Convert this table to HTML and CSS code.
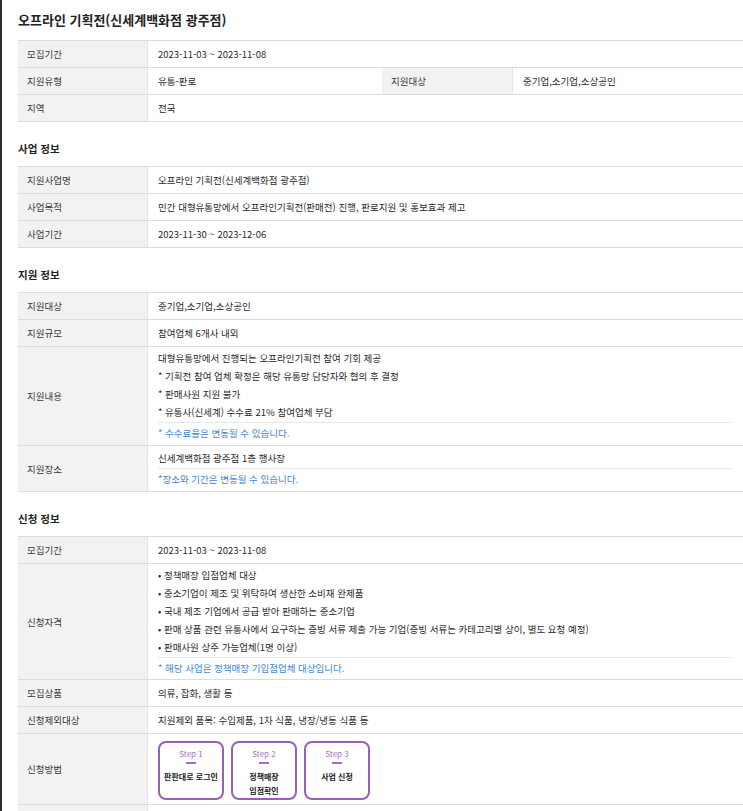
FILE: index.html
```html
<!DOCTYPE html>
<html lang="ko">
<head>
    <meta charset="UTF-8">
    <meta name="viewport" content="width=device-width, initial-scale=1.0">
    <link rel="stylesheet" href="styles.css">
    <title>오프라인 기획전(신세계백화점 광주점)</title>
</head>
<body>
    <section id="page">

        <h1 class="page-title">오프라인 기획전(신세계백화점 광주점)</h1>

        <div class="info-table">
            <div class="row">
                <div class="th">모집기간</div>
                <div class="td">2023-11-03 ~ 2023-11-08</div>
            </div>
            <div class="row quad">
                <div class="th">지원유형</div>
                <div class="td">유통-판로</div>
                <div class="th">지원대상</div>
                <div class="td">중기업,소기업,소상공인</div>
            </div>
            <div class="row">
                <div class="th">지역</div>
                <div class="td">전국</div>
            </div>
        </div>

        <h2 class="section-title">사업 정보</h2>
        <div class="info-table">
            <div class="row">
                <div class="th">지원사업명</div>
                <div class="td">오프라인 기획전(신세계백화점 광주점)</div>
            </div>
            <div class="row">
                <div class="th">사업목적</div>
                <div class="td">민간 대형유통망에서 오프라인기획전(판매전) 진행, 판로지원 및 홍보효과 제고</div>
            </div>
            <div class="row">
                <div class="th">사업기간</div>
                <div class="td">2023-11-30 ~ 2023-12-06</div>
            </div>
        </div>

        <h2 class="section-title">지원 정보</h2>
        <div class="info-table">
            <div class="row">
                <div class="th">지원대상</div>
                <div class="td">중기업,소기업,소상공인</div>
            </div>
            <div class="row">
                <div class="th">지원규모</div>
                <div class="td">참여업체 6개사 내외</div>
            </div>
            <div class="row">
                <div class="th">지원내용</div>
                <div class="td multi tall">
                    <p>대형유통망에서 진행되는 오프라인기획전 참여 기회 제공</p>
                    <p>* 기획전 참여 업체 확정은 해당 유통망 담당자와 협의 후 결정</p>
                    <p>* 판매사원 지원 불가</p>
                    <p>* 유통사(신세계) 수수료 21% 참여업체 부담</p>
                    <p class="note">* 수수료율은 변동될 수 있습니다.</p>
                </div>
            </div>
            <div class="row">
                <div class="th">지원장소</div>
                <div class="td multi place">
                    <p>신세계백화점 광주점 1층 행사장</p>
                    <p class="note">*장소와 기간은 변동될 수 있습니다.</p>
                </div>
            </div>
        </div>

        <h2 class="section-title">신청 정보</h2>
        <div class="info-table">
            <div class="row">
                <div class="th">모집기간</div>
                <div class="td">2023-11-03 ~ 2023-11-08</div>
            </div>
            <div class="row">
                <div class="th">신청자격</div>
                <div class="td multi">
                    <p>• 정책매장 입점업체 대상</p>
                    <p>• 중소기업이 제조 및 위탁하여 생산한 소비재 완제품</p>
                    <p>• 국내 제조 기업에서 공급 받아 판매하는 중소기업</p>
                    <p>• 판매 상품 관련 유통사에서 요구하는 증빙 서류 제출 가능 기업(증빙 서류는 카테고리별 상이, 별도 요청 예정)</p>
                    <p>• 판매사원 상주 가능업체(1명 이상)</p>
                    <p class="note">* 해당 사업은 정책매장 기입점업체 대상입니다.</p>
                </div>
            </div>
            <div class="row">
                <div class="th">모집상품</div>
                <div class="td">의류, 잡화, 생활 등</div>
            </div>
            <div class="row">
                <div class="th">신청제외대상</div>
                <div class="td">지원제외 품목: 수입제품, 1차 식품, 냉장/냉동 식품 등</div>
            </div>
            <div class="row">
                <div class="th">신청방법</div>
                <div class="td steps">
                    <div class="step">
                        <span class="step-no">Step 1</span>
                        <span class="step-bar"></span>
                        <span class="step-name">판판대로 로그인</span>
                    </div>
                    <div class="step">
                        <span class="step-no">Step 2</span>
                        <span class="step-bar"></span>
                        <span class="step-name">정책매장<br>입점확인</span>
                    </div>
                    <div class="step">
                        <span class="step-no">Step 3</span>
                        <span class="step-bar"></span>
                        <span class="step-name">사업 신청</span>
                    </div>
                </div>
            </div>
            <div class="row">
                <div class="th"></div>
                <div class="td"></div>
            </div>
        </div>

    </section>
</body>
</html>
```

FILE: styles.css
```css
* {
    box-sizing: border-box;
    font-family: "Noto Sans CJK KR", "Noto Sans", sans-serif;
}

html, body {
    margin: 0;
    padding: 0;
    background-color: #FFFFFF;
}

body {
    min-height: 100vh;
    border-left: 2px solid #2E2E2E;
    overflow: hidden;
}

#page {
    padding: 10px 0 0 16px;

    color: #2A2A2A;
    font-size: 9.5px;
}

.page-title {
    margin: 0 0 10px 0;

    line-height: 20px;
    font-size: 13px;
    font-weight: bold;
    color: #222222;
}

.section-title {
    margin: 0 0 8px 0;
    padding-top: 18px;

    line-height: 18px;
    font-size: 10.5px;
    font-weight: bold;
    color: #222222;
}

.section-title + .info-table {
    margin-top: 0;
}

/*

    TABLES

*/

.info-table {
    border-top: 1px solid #DCDCDC;
}

.row {
    display: grid;
    grid-template-columns: 130px 1fr;

    border-bottom: 1px solid #DCDCDC;
}

.row.quad {
    grid-template-columns: 130px 234px 131px 1fr;
}

.th {
    display: flex;
    align-items: center;

    min-height: 26px;
    padding-left: 9px;

    background-color: #F2F2F2;
    border-right: 1px solid #E4E4E4;

    color: #3A3A3A;
}

.td {
    min-height: 26px;
    padding: 4px 10px;

    line-height: 18px;
    white-space: nowrap;
}

.td p {
    margin: 0;
}

.td.multi {
    padding: 2px 10px 1px 10px;
}

.td.multi.tall {
    padding: 2px 10px 2px 10px;
}

.td.multi.place {
    padding: 3px 10px 2px 10px;
}

.td .note {
    margin-top: 1px;

    border-top: 1px solid #E8E8E8;

    line-height: 20px;
    color: #3F87D4;
}

/*

    STEPS

*/

.td.steps {
    display: flex;
    gap: 7px;

    padding: 7px 10px 4px 10px;
}

.step {
    display: flex;
    flex-direction: column;
    align-items: center;

    width: 66px;
    height: 59px;
    padding-top: 5px;

    border: 2px solid #9C5FB8;
    border-radius: 8px;

    text-align: center;
}

.step-no {
    line-height: 12px;
    font-size: 8px;
    color: #A46BC4;
}

.step-bar {
    width: 10px;
    height: 2px;
    margin-top: 2px;

    background-color: #A46BC4;
}

.step-name {
    margin-top: 6px;

    line-height: 14px;
    font-size: 8px;
    font-weight: bold;
    color: #222222;
}
```
